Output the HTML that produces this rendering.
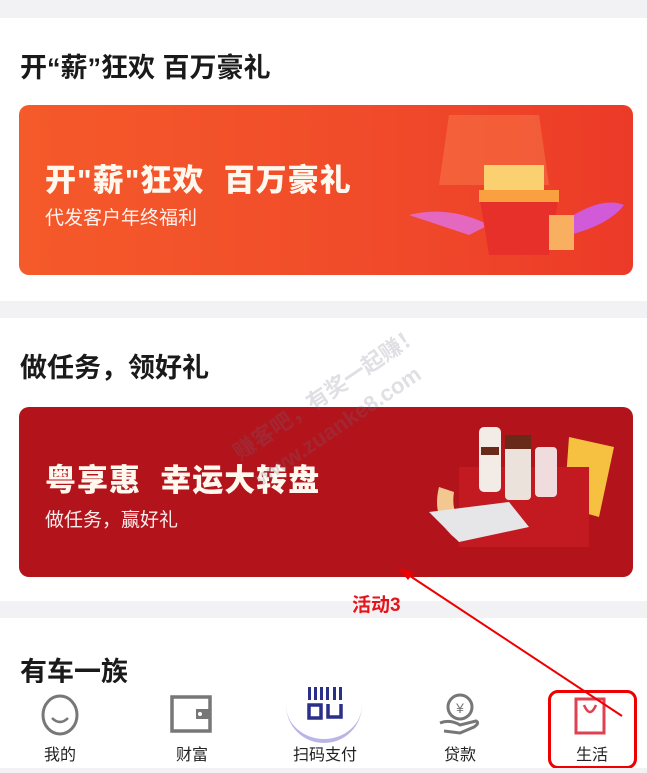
<!DOCTYPE html>
<html><head><meta charset="utf-8"><style>
*{margin:0;padding:0;box-sizing:border-box}
body{width:647px;height:773px;overflow:hidden;background:#f2f2f4;font-family:"Liberation Sans","Noto Sans CJK SC",sans-serif;position:relative}
.card{position:absolute;left:0;width:647px;background:#fff}
.h{position:absolute;left:20px;font-size:27px;color:#1a1a1a;font-weight:bold}
.ban{position:absolute;left:19px;width:614px;border-radius:10px;overflow:hidden}
.bt{position:absolute;left:26px;color:#fff8ee;font-weight:900;font-size:31px;letter-spacing:1px}
.bs{position:absolute;left:26px;color:#fff;font-size:19px;opacity:.92}
.nav{position:absolute;left:0;top:683px;width:647px;height:90px;background:#fff}
.ni{position:absolute;top:58px;font-size:16px;color:#222;width:100px;text-align:center}
.wm{position:absolute;transform:rotate(-34deg);transform-origin:left top;color:rgba(110,110,130,.22);font-size:22px;font-weight:bold;white-space:nowrap}
</style></head><body>
<div class="card" style="top:18px;height:283px"></div>
<div class="h" style="top:46px">开“薪”狂欢 百万豪礼</div>
<div class="ban" style="top:105px;height:170px;background:linear-gradient(90deg,#f55a2a,#f04a2a 60%,#ec3a28)">
 <div class="bt" style="top:50px">开"薪"狂欢&nbsp; 百万豪礼</div>
 <div class="bs" style="top:98px">代发客户年终福利</div>
 <svg style="position:absolute;left:370px;top:0" width="244" height="170">
  <polygon points="60,10 150,10 160,80 50,80" fill="#f77a4a" opacity=".5"/>
  <path d="M20,110 Q60,100 100,120 L80,130 Z" fill="#e468c0"/>
  <path d="M170,120 Q210,90 235,100 Q220,120 180,130 Z" fill="#d05ad8"/>
  <rect x="95" y="60" width="60" height="30" fill="#fbd070"/>
  <polygon points="90,90 170,90 160,150 100,150" fill="#e8302a"/>
  <rect x="90" y="85" width="80" height="12" fill="#fba040"/>
  <rect x="160" y="110" width="25" height="35" fill="#f8b060"/>
 </svg>
</div>
<div class="card" style="top:318px;height:283px"></div>
<div class="h" style="top:346px">做任务，领好礼</div>
<div class="ban" style="top:407px;height:170px;background:#b3141c">
 <div class="bt" style="top:48px">粤享惠&nbsp; 幸运大转盘</div>
 <div class="bs" style="top:98px">做任务，赢好礼</div>
 <svg style="position:absolute;left:370px;top:0" width="244" height="170">
  <path d="M50,80 Q40,120 80,140 L90,130 Q60,115 65,85 Z" fill="#f2c890"/>
  <polygon points="180,30 225,40 210,110 175,100" fill="#f6c040"/>
  <rect x="70" y="60" width="130" height="80" fill="#c21a20"/>
  <rect x="90" y="20" width="22" height="65" rx="5" fill="#f2ebe6"/>
  <rect x="116" y="28" width="26" height="65" rx="4" fill="#ece2dc"/>
  <rect x="146" y="40" width="22" height="50" rx="4" fill="#f0dcdc"/>
  <rect x="116" y="28" width="26" height="14" fill="#6a2a1a"/>
  <rect x="92" y="40" width="18" height="8" fill="#6a2a1a"/>
  <path d="M40,105 L120,95 L140,120 L70,135 Z" fill="#e6e6e8"/>
 </svg>
</div>
<div class="card" style="top:618px;height:80px"></div>
<div class="h" style="top:650px">有车一族</div>
<div style="position:absolute;left:352px;top:590px;color:#e5141a;font-weight:bold;font-size:19px">活动3</div>
<div class="nav">
 <svg style="position:absolute;left:38px;top:10px" width="44" height="44"><ellipse cx="22" cy="22" rx="17" ry="19" fill="none" stroke="#777" stroke-width="3"/><path d="M14,25 Q22,33 30,25" fill="none" stroke="#777" stroke-width="2.5"/></svg>
 <svg style="position:absolute;left:168px;top:10px" width="50" height="44"><rect x="4" y="4" width="38" height="34" fill="none" stroke="#777" stroke-width="3.5"/><rect x="28" y="16" width="14" height="10" fill="#777"/><circle cx="32" cy="21" r="2" fill="#fff"/></svg>
 <div style="position:absolute;left:286px;top:-16px;width:76px;height:76px;border-radius:50%;background:#fff;border-bottom:4px solid #b9b5e6"></div>
 <svg style="position:absolute;left:303px;top:-2px" width="44" height="44"><g fill="#2a2f8a"><rect x="5" y="6" width="3" height="13"/><rect x="11" y="6" width="3" height="13"/><rect x="17" y="6" width="3" height="13"/><rect x="23" y="6" width="3" height="13"/><rect x="30" y="6" width="3" height="13"/><rect x="36" y="6" width="3" height="13"/></g><rect x="6" y="24" width="12" height="13" fill="none" stroke="#2a2f8a" stroke-width="3.5"/><path d="M25,23 V36 H38 V23" fill="none" stroke="#2a2f8a" stroke-width="3.5"/></svg>
 <svg style="position:absolute;left:436px;top:8px" width="48" height="46"><circle cx="24" cy="16" r="12" fill="none" stroke="#777" stroke-width="3"/><text x="24" y="22" font-size="14" text-anchor="middle" fill="#777" font-family="Liberation Sans">¥</text><path d="M4,32 Q14,28 24,34 L40,30 Q44,32 38,36 L24,42 L8,40" fill="none" stroke="#777" stroke-width="3"/></svg>
 <svg style="position:absolute;left:570px;top:12px" width="40" height="42"><rect x="6" y="4" width="28" height="34" fill="none" stroke="#e04050" stroke-width="3"/><path d="M14,10 Q20,24 26,10" fill="none" stroke="#e04050" stroke-width="2.5"/></svg>
 <div class="ni" style="left:10px">我的</div>
 <div class="ni" style="left:142px">财富</div>
 <div class="ni" style="left:275px">扫码支付</div>
 <div class="ni" style="left:410px">贷款</div>
 <div class="ni" style="left:542px">生活</div>
</div>
<div style="position:absolute;left:548px;top:690px;width:89px;height:79px;border:3px solid #e00;border-radius:10px"></div>
<svg style="position:absolute;left:0;top:0" width="647" height="773"><line x1="622" y1="716" x2="404" y2="572" stroke="#e00" stroke-width="2"/><polygon points="398,568 414,572 408,580" fill="#e00"/></svg>
<div class="wm" style="left:226px;top:440px">赚客吧，有奖一起赚！</div>
<div class="wm" style="left:250px;top:470px">www.zuanke8.com</div>
<div style="position:absolute;left:0;top:768px;width:647px;height:5px;background:#f2f2f4"></div>
</body></html>
